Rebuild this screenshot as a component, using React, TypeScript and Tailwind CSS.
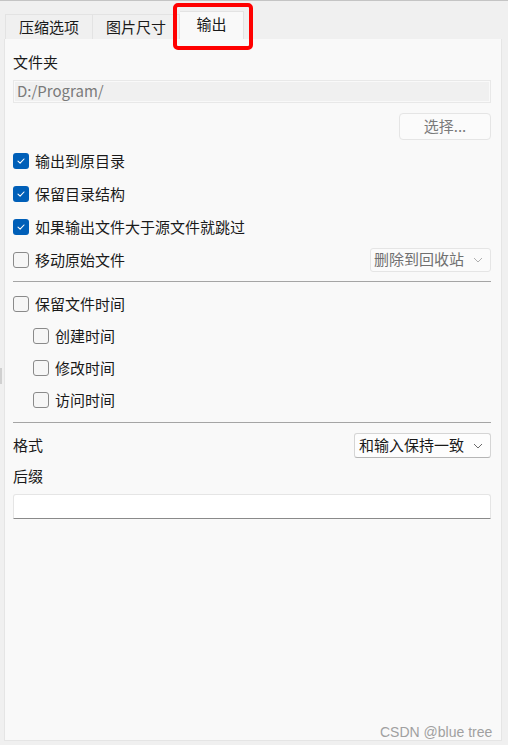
import React from "react";

const font = { fontFamily: '"Noto Sans CJK SC", "Noto Sans", sans-serif' };

function Check({ checked }: { checked?: boolean }) {
  if (checked) {
    return (
      <div className="w-4 h-4 rounded-[3px] bg-[#005fb8] flex items-center justify-center shrink-0">
        <svg width="10" height="10" viewBox="0 0 10 10">
          <path d="M2 5.2 L4.1 7.2 L8 3" stroke="white" strokeWidth="1.1" fill="none" strokeLinecap="round" strokeLinejoin="round" />
        </svg>
      </div>
    );
  }
  return <div className="w-4 h-4 rounded-[3px] border border-[#8a8a8a] bg-[#f6f6f6] shrink-0" />;
}

function Row({ checked, label, indent, h = "h-[33px]", children }: { checked?: boolean; label: string; indent?: boolean; h?: string; children?: React.ReactNode }) {
  return (
    <div className={`flex items-center ${h} ${indent ? "pl-5" : ""}`}>
      <Check checked={checked} />
      <span className="ml-[6px] text-[15px] text-[#1a1a1a] leading-5">{label}</span>
      {children}
    </div>
  );
}

function Chevron({ color = "#6a6a6a" }: { color?: string }) {
  return (
    <svg width="10" height="6" viewBox="0 0 10 6" className="shrink-0">
      <path d="M1 1 L5 5 L9 1" stroke={color} strokeWidth="1" fill="none" />
    </svg>
  );
}

export default function App() {
  return (
    <div className="w-[508px] h-[745px] bg-[#f0f0f0] border-t border-[#c4c4c4] relative overflow-hidden" style={font}>
      {/* tabs */}
      <div className="flex items-end pl-[5px] pt-[9px] h-[38px]">
        <div className="w-[88px] h-[25px] border border-b-0 border-[#e3e3e3] bg-[#f0f0f0] flex items-center justify-center text-[15px] text-[#1a1a1a]">压缩选项</div>
        <div className="w-[87px] h-[25px] border border-b-0 border-l-0 border-[#e3e3e3] bg-[#f0f0f0] flex items-center justify-center text-[15px] text-[#1a1a1a]">图片尺寸</div>
        <div className="w-[64px] h-[28px] border border-b-0 border-l-0 border-[#e3e3e3] bg-[#f9f9f9] flex items-center justify-center text-[15px] text-[#1a1a1a] pb-[3px]">输出</div>
      </div>
      {/* panel */}
      <div className="ml-[4px] w-[498px] h-[702px] bg-[#f9f9f9] border border-t-0 border-[#e5e5e5] px-[8px] pt-[13px] flex flex-col">
        <div className="h-5 flex items-center text-[15px] text-[#1a1a1a] leading-5">文件夹</div>
        <div className="mt-2 h-[23px] w-[478px] border border-[#e8e8e8] p-px">
          <div className="h-full bg-[#f0f0f0] flex items-center pl-[2px] text-[15px] text-[#7a7a7a]">D:/Program/</div>
        </div>
        <div className="mt-[10px] flex justify-end w-[478px]">
          <div className="w-[92px] h-[27px] rounded-[4px] border border-[#e5e5e5] bg-[#fbfbfb] flex items-center justify-center text-[15px] text-[#7a7a7a]">选择...</div>
        </div>
        <div className="mt-1 flex flex-col w-[478px]">
          <Row checked label="输出到原目录" />
          <Row checked label="保留目录结构" />
          <Row checked label="如果输出文件大于源文件就跳过" />
          <Row label="移动原始文件">
            <div className="ml-auto w-[121px] h-[24px] rounded-[3px] border border-[#e5e5e5] bg-[#fbfbfb] flex items-center pl-[3px] pr-[7px] text-[15px] text-[#707070]">
              <span className="flex-1">删除到回收站</span>
              <Chevron color="#b0b0b0" />
            </div>
          </Row>
        </div>
        <div className="mt-[5px] h-px w-[478px] bg-[#a5a5a5]" />
        <div className="mt-[6px] flex flex-col w-[478px]">
          <Row label="保留文件时间" h="h-8" />
          <Row label="创建时间" indent h="h-8" />
          <Row label="修改时间" indent h="h-8" />
          <Row label="访问时间" indent h="h-8" />
        </div>
        <div className="mt-[6px] h-px w-[478px] bg-[#a5a5a5]" />
        <div className="mt-[10px] h-[25px] w-[478px] flex items-center">
          <span className="text-[15px] text-[#1a1a1a]">格式</span>
          <div className="ml-auto w-[137px] h-[25px] rounded-[3px] border border-[#d5d5d5] border-b-[#b5b5b5] bg-[#fdfdfd] flex items-center pl-[4px] pr-[7px] text-[15px] text-[#1a1a1a]">
            <span className="flex-1">和输入保持一致</span>
            <Chevron />
          </div>
        </div>
        <div className="mt-2 h-5 flex items-center text-[15px] text-[#1a1a1a] leading-5">后缀</div>
        <div className="mt-2 h-[25px] w-[478px] bg-white border border-[#e5e5e5] border-b-[#8a8a8a] rounded-t-[3px]" />
      </div>
      {/* left splitter mark */}
      <div className="absolute left-0 top-[367px] w-[2px] h-[16px] bg-[#d0d0d0]" />
      {/* red annotation */}
      <div className="absolute left-[173px] top-[2px] w-[80px] h-[47px] border-4 border-[#ff0000] rounded-[5px]" />
      {/* watermark */}
      <div className="absolute left-[380px] top-[722px] text-[14px] leading-[18px] text-[#a0a0a0]" style={{ fontFamily: '"Liberation Sans", Arial, sans-serif' }}>CSDN @blue tree</div>
    </div>
  );
}
